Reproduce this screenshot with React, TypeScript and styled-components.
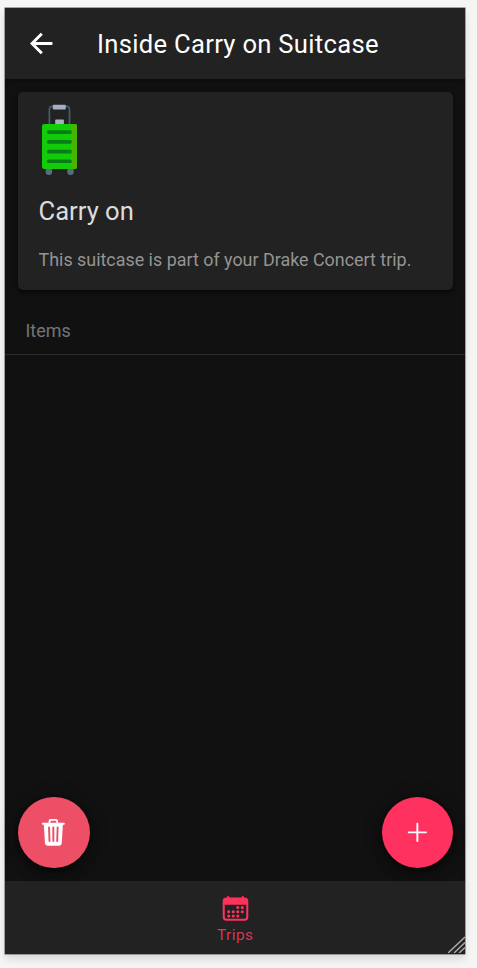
import React from "react";
import styled, { createGlobalStyle } from "styled-components";
import { IoTrash, IoAdd, IoArrowBackSharp } from "react-icons/io5";

const GlobalStyle = createGlobalStyle`
  * { box-sizing: border-box; }
  body {
    margin: 0;
    background: #f5f5f5;
    font-family: Roboto, sans-serif;
    overflow: hidden;
  }
`;

const Stage = styled.main`
  height: 968px;
  padding: 8px 11.6px 14.5px 5px;
`;

const Phone = styled.section`
  position: relative;
  display: flex;
  flex-direction: column;
  height: 945.5px;
  background: #111;
  box-shadow: 0 0 0 0.5px #555, 0 5px 8px rgba(0, 0, 0, 0.12);
`;

const Header = styled.header`
  display: flex;
  align-items: center;
  flex: 0 0 71px;
  padding: 0 20px 0 20.5px;
  background: #222;
  color: #fff;
`;

const BackButton = styled.button`
  display: flex;
  width: 31px;
  padding: 0;
  border: 0;
  background: none;
  color: inherit;
  font-size: 31px;
`;

const Title = styled.h1`
  margin: 1px 0 0 40.5px;
  font-size: 25.6px;
  font-weight: 400;
  line-height: 32px;
  letter-spacing: 0.3px;
  white-space: nowrap;
`;

const Content = styled.div`
  display: flex;
  flex: 1;
  flex-direction: column;
  box-shadow: inset 0 4px 5px -2px rgba(0, 0, 0, 0.35);
`;

const Card = styled.article`
  height: 198px;
  margin: 13px 12.4px 0 13px;
  padding: 11px 20px 0 20.5px;
  border-radius: 5px;
  background: #222;
  box-shadow: 0 4px 2px -3px rgba(0, 0, 0, 0.3), 0 2px 3px rgba(0, 0, 0, 0.3),
    0 1px 7px rgba(0, 0, 0, 0.3);
`;

const SuitcaseIcon = styled.svg`
  display: block;
  width: 42px;
  height: 74px;
`;

const CardTitle = styled.h2`
  margin: 19px 0 0;
  color: #dcdcdc;
  font-size: 25.6px;
  font-weight: 400;
  line-height: 31px;
`;

const CardText = styled.p`
  margin: 19px 0 0;
  color: #949494;
  font-size: 17.9px;
  line-height: 27px;
  white-space: nowrap;
`;

const ListHeader = styled.h3`
  display: flex;
  align-items: center;
  height: 51px;
  margin: 14px 0 0;
  padding: 2px 0 0 20.5px;
  border-bottom: 1px solid #2c2c2c;
  color: #757575;
  font-size: 17.92px;
  font-weight: 400;
`;

const Actions = styled.div`
  display: flex;
  justify-content: space-between;
  margin-top: auto;
  padding: 0 12.4px 13px 13px;
`;

const RoundButton = styled.button<{ $color: string }>`
  display: flex;
  align-items: center;
  justify-content: center;
  width: 71.5px;
  height: 71.5px;
  padding: 0;
  border: 0;
  border-radius: 50%;
  background: ${({ $color }) => $color};
  color: #fff;
  font-size: 30.7px;
  box-shadow: 0 4px 6px -1px rgba(0, 0, 0, 0.3), 0 7px 12px rgba(0, 0, 0, 0.24),
    0 1px 20px rgba(0, 0, 0, 0.22);
`;

const TabBar = styled.nav`
  display: flex;
  justify-content: center;
  flex: 0 0 72.5px;
  background: #222;
`;

const Tab = styled.a`
  display: flex;
  flex-direction: column;
  align-items: center;
  padding-top: 13px;
  color: #ff325c;
`;

const CalendarIcon = styled.svg`
  width: 29px;
  height: 29px;
`;

const TabLabel = styled.span`
  margin-top: 3px;
  color: #d73557;
  font-size: 15.4px;
  line-height: 18px;
  letter-spacing: 0.46px;
`;

const ResizeGrip = styled.svg`
  position: absolute;
  right: 0.5px;
  bottom: 1px;
  width: 17px;
  height: 17px;
`;

const calendarDots = [
  [296, 240], [376, 240],
  [136, 315], [216, 315], [296, 315], [376, 315],
  [136, 390], [216, 390], [296, 390],
];

function Suitcase() {
  return (
    <SuitcaseIcon viewBox="0 0 42 74" aria-label="Suitcase">
      <path d="M10.4 22V6.4q0-3.1 3-3.1h14q3.1 0 3.1 3.1V22" fill="none" stroke="#455a64" strokeWidth="1.8" />
      <rect x="13.8" y="1.7" width="13" height="4.8" rx="1" fill="#a5afbf" />
      <rect x="16.2" y="16.4" width="8.7" height="6" rx="0.8" fill="#a5afbf" />
      <rect x="6.7" y="64" width="6.4" height="8" rx="3" fill="#546e7a" />
      <rect x="28.3" y="64" width="6.4" height="8" rx="3" fill="#546e7a" />
      <rect x="3" y="21" width="35" height="45" rx="2.3" fill="#12cc08" />
      <path d="M32.5 21h3.2q2.3 0 2.3 2.3v40.4q0 2.3-2.3 2.3h-3.2z" fill="#48b400" />
      {[27.3, 37.1, 46.8, 56.5].map((y) => (
        <rect key={y} x="8" y={y} width="24.7" height="3.6" rx="1.5" fill="#077d17" />
      ))}
    </SuitcaseIcon>
  );
}

function Calendar() {
  return (
    <CalendarIcon viewBox="0 0 512 512" fill="currentColor" aria-hidden="true">
      <rect x="48" y="80" width="416" height="376" rx="48" fill="none" stroke="currentColor" strokeWidth="36" />
      <path d="M48 188v-60a48 48 0 0 1 48-48h320a48 48 0 0 1 48 48v60z" />
      <path d="M128 48v40M384 48v40" fill="none" stroke="currentColor" strokeWidth="32" strokeLinecap="round" />
      {calendarDots.map(([x, y]) => (
        <circle key={`${x}-${y}`} cx={x} cy={y} r="27" />
      ))}
    </CalendarIcon>
  );
}

export default function App() {
  return (
    <>
      <GlobalStyle />
      <Stage>
        <Phone>
          <Header>
            <BackButton aria-label="Back"><IoArrowBackSharp /></BackButton>
            <Title>Inside Carry on Suitcase</Title>
          </Header>
          <Content>
            <Card>
              <Suitcase />
              <CardTitle>Carry on</CardTitle>
              <CardText>This suitcase is part of your Drake Concert trip.</CardText>
            </Card>
            <ListHeader>Items</ListHeader>
            <Actions>
              <RoundButton $color="#ed4f67" aria-label="Delete suitcase"><IoTrash /></RoundButton>
              <RoundButton $color="#ff325f" aria-label="Add item"><IoAdd /></RoundButton>
            </Actions>
          </Content>
          <TabBar>
            <Tab>
              <Calendar />
              <TabLabel>Trips</TabLabel>
            </Tab>
          </TabBar>
          <ResizeGrip viewBox="0 0 17 17" aria-hidden="true">
            <path d="M0 17L17 1M6 17L17 6.5M11 17l6-5.5" fill="none" stroke="#a9a9a6" strokeWidth="1.5" />
          </ResizeGrip>
        </Phone>
      </Stage>
    </>
  );
}
